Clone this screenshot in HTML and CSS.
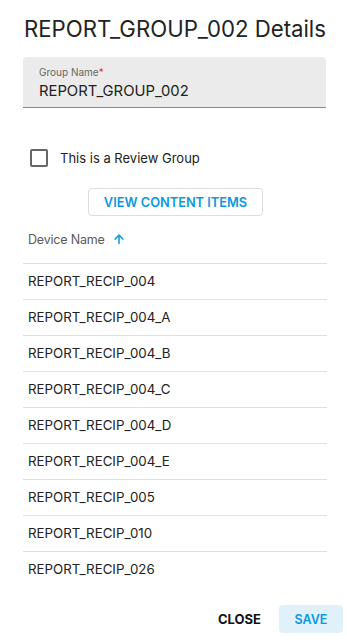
FILE: index.html
```html
<!DOCTYPE html>
<html>
<head>
<meta charset="utf-8">
<link rel="stylesheet" href="styles.css">
</head>
<body>
<div class="dialog">
  <h1 class="title">REPORT_GROUP_002 Details</h1>
  <div class="field">
    <div class="field-label">Group Name<span class="req">*</span></div>
    <div class="field-value">REPORT_GROUP_002</div>
  </div>
  <label class="check-row">
    <span class="checkbox"></span>
    <span class="check-label">This is a Review Group</span>
  </label>
  <div class="btn-row">
    <button class="outline-btn">VIEW CONTENT ITEMS</button>
  </div>
  <div class="table-head">
    <span>Device Name</span>
    <svg class="sort-icon" width="14" height="14" viewBox="0 0 24 24"><path d="M4 12l1.41 1.41L11 7.83V20h2V7.83l5.58 5.59L20 12l-8-8-8 8z" fill="#0b98de" stroke="#0b98de" stroke-width="0.8"/></svg>
  </div>
  <div class="rows">
    <div class="row">REPORT_RECIP_004</div>
    <div class="row">REPORT_RECIP_004_A</div>
    <div class="row">REPORT_RECIP_004_B</div>
    <div class="row">REPORT_RECIP_004_C</div>
    <div class="row">REPORT_RECIP_004_D</div>
    <div class="row">REPORT_RECIP_004_E</div>
    <div class="row">REPORT_RECIP_005</div>
    <div class="row">REPORT_RECIP_010</div>
    <div class="row">REPORT_RECIP_026</div>
  </div>
  <div class="footer">
    <button class="text-btn">CLOSE</button>
    <button class="save-btn">SAVE</button>
  </div>
</div>
</body>
</html>
```
FILE: styles.css
```css
* { box-sizing: border-box; }
html, body { margin: 0; padding: 0; background: #fff; }
body { font-family: Inter, "Noto Sans", sans-serif; color: #222; }
.dialog { width: 347px; height: 642px; padding: 15px 4px 0 23px; display: flex; flex-direction: column; }
.title { margin: 0 0 14px 1px; font-size: 22.2px; font-weight: 400; line-height: 28px; letter-spacing: 0; color: #222; white-space: nowrap; }
.field { width: 303px; height: 51px; background: #ebebeb; border-radius: 4px 4px 0 0; border-bottom: 1px solid #8a8a8a; padding: 8px 16px 0 16px; }
.field-label { font-size: 10px; line-height: 14px; color: #666; }
.req { color: #e53935; }
.field-value { font-size: 14.8px; line-height: 20px; margin-top: 2px; color: #222; }
.check-row { display: flex; align-items: center; margin: 41px 0 0 7px; height: 18px; gap: 12px; }
.checkbox { width: 18px; height: 18px; border: 2px solid #666; border-radius: 2px; }
.check-label { font-size: 13px; color: #222; }
.btn-row { display: flex; margin: 21px 0 0 65px; }
.outline-btn { height: 28px; width: 175px; border: 1px solid #ddd; border-radius: 4px; background: #fff; color: #0b98de; font-family: inherit; font-size: 12.8px; font-weight: 600; padding: 0; }
.table-head { display: flex; align-items: center; gap: 7px; height: 48px; padding-left: 5px; border-bottom: 1px solid #e0e0e0; width: 304px; font-size: 12.5px; color: #5a5a5a; letter-spacing: -0.2px; padding-bottom: 1px; }
.sort-icon { display: block; }
.rows { width: 304px; }
.row { height: 36px; line-height: 35px; padding-left: 5px; font-size: 13.3px; color: #222; border-bottom: 1px solid #e0e0e0; }
.row:last-child { border-bottom: none; }
.footer { display: flex; justify-content: flex-end; align-items: center; gap: 18px; margin-top: 17px; padding-right: 0; }
.text-btn { background: none; border: none; font-family: inherit; font-size: 13px; font-weight: 700; color: #111; padding: 0; }
.save-btn { width: 64px; height: 28px; border: none; border-radius: 4px; background: #e0f1fa; color: #0b98de; font-family: inherit; font-size: 12.5px; font-weight: 600; padding: 0; }
```
